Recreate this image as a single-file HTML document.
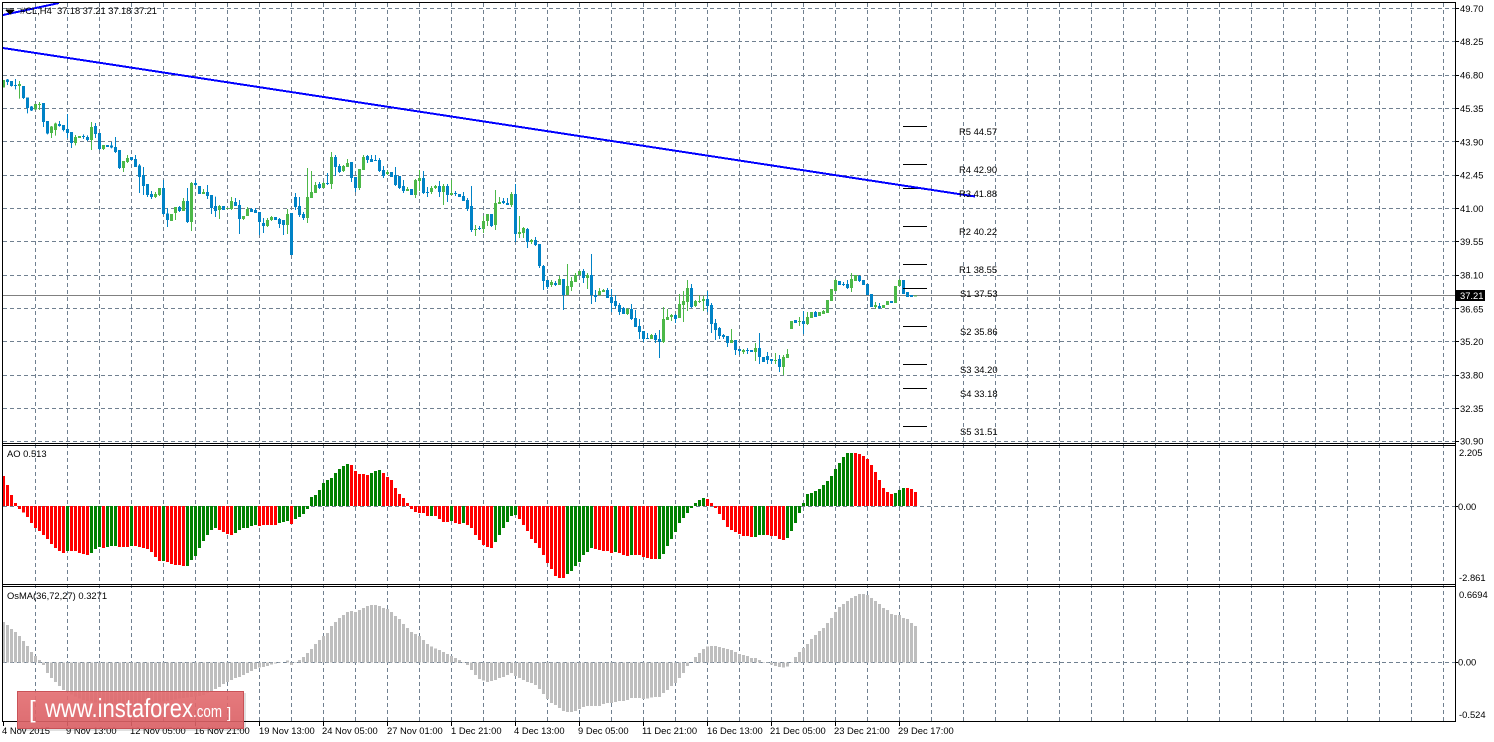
<!DOCTYPE html>
<html>
<head>
<meta charset="utf-8">
<title>CL H4</title>
<style>
html,body{margin:0;padding:0;background:#fff;width:1494px;height:742px;overflow:hidden}
svg{display:block;position:absolute;left:0;top:0}
text{font-family:"Liberation Sans",sans-serif;font-size:9.4px;fill:#000}
.b{stroke:#0082c6;fill:none}
.g{stroke:#4cb848;fill:none}
.w{stroke-width:1}
.t{stroke-width:3}
.wm{font-size:26px;fill:#fff}
</style>
</head>
<body>
<svg width="1494" height="742" viewBox="0 0 1494 742" xmlns="http://www.w3.org/2000/svg">
<!-- grid -->
<g shape-rendering="crispEdges" stroke="#708090" stroke-width="1" stroke-dasharray="4 3" fill="none">
<path d="M3 8.5H1455M3 41.5H1455M3 75.5H1455M3 108.5H1455M3 141.5H1455M3 175.5H1455M3 208.5H1455M3 241.5H1455M3 275.5H1455M3 308.5H1455M3 341.5H1455M3 375.5H1455M3 408.5H1455M3 441.5H1455M3 506.5H1455M3 662.5H1455"/>
<path id="v1" d="M35.5 3V721M67.5 3V721M99.5 3V721M131.5 3V721M163.5 3V721M195.5 3V721M227.5 3V721M259.5 3V721M291.5 3V721M323.5 3V721M355.5 3V721M387.5 3V721M419.5 3V721M451.5 3V721M483.5 3V721M515.5 3V721M547.5 3V721M579.5 3V721M611.5 3V721M643.5 3V721M675.5 3V721M707.5 3V721M739.5 3V721M771.5 3V721M803.5 3V721M835.5 3V721M867.5 3V721M899.5 3V721M931.5 3V721M963.5 3V721M995.5 3V721M1027.5 3V721M1059.5 3V721M1091.5 3V721M1123.5 3V721M1155.5 3V721M1187.5 3V721M1219.5 3V721M1251.5 3V721M1283.5 3V721M1315.5 3V721M1347.5 3V721M1379.5 3V721M1411.5 3V721M1443.5 3V721"/>
</g>
<!-- current price line -->
<path d="M3 295.5H1455" stroke="#808080" stroke-width="1" shape-rendering="crispEdges"/>
<!-- candles left -->
<g shape-rendering="crispEdges" transform="scale(1,.33333)">
<path class="b w" d="M7.5 237V255M11.5 243V260M15.5 237V268M23.5 258V297M27.5 293V340M31.5 318V333M43.5 309V381M47.5 363V403M59.5 363V380M63.5 375V394M67.5 342V414M71.5 396V444M83.5 403V417M87.5 406V423M95.5 369V414M99.5 399V450M107.5 435V441M111.5 426V445M115.5 411V459M119.5 450V507M131.5 471V480M135.5 465V501M139.5 492V579M143.5 501V585M147.5 552V591M151.5 573V597M163.5 540V645M167.5 624V681M179.5 618V636M187.5 564V669M195.5 540V558M199.5 558V582M207.5 555V597M211.5 585V642M215.5 590V651M223.5 618V630M235.5 594V618M239.5 600V702M251.5 624V636M255.5 624V639M259.5 636V705M263.5 654V699M275.5 651V660M279.5 654V684M283.5 660V705M291.5 639V765M295.5 579V630M299.5 591V651M303.5 636V660M319.5 546V567M327.5 519V555M335.5 465V528M339.5 492V519M351.5 486V546M355.5 531V576M367.5 465V489M371.5 465V486M375.5 465V483M379.5 474V516M383.5 498V534M391.5 516V531M395.5 501V558M399.5 528V567"/>
<path class="b t" d="M7.5 239V246M11.5 243V258M15.5 255V258M23.5 258V294M27.5 293V324M31.5 320V331M43.5 309V366M47.5 363V400M59.5 372V378M63.5 375V390M67.5 387V399M71.5 396V429M83.5 408V411M87.5 411V420M95.5 378V402M99.5 399V447M107.5 435V441M111.5 436V442M115.5 441V456M119.5 450V504M131.5 471V480M135.5 477V501M139.5 497V531M143.5 525V558M147.5 552V585M151.5 582V591M163.5 564V642M167.5 640V660M179.5 621V633M187.5 603V666M195.5 549V555M199.5 558V582M207.5 576V588M211.5 585V624M215.5 618V633M223.5 618V630M235.5 606V618M239.5 615V657M251.5 627V636M255.5 630V639M259.5 636V666M263.5 669V678M275.5 651V660M279.5 657V672M283.5 660V675M291.5 639V765M295.5 591V621M299.5 618V645M303.5 642V654M319.5 552V564M327.5 549V552M335.5 471V501M339.5 498V516M351.5 486V534M355.5 531V564M367.5 468V480M371.5 477V486M375.5 480V483M379.5 480V513M383.5 510V528M391.5 516V531M395.5 525V555M399.5 528V564"/>
<path class="g w" d="M3.5 240V262M19.5 243V296M35.5 312V329M39.5 306V330M51.5 378V414M55.5 368V407M75.5 405V436M79.5 408V414M91.5 366V450M103.5 435V450M123.5 483V516M127.5 465V489M155.5 576V594M159.5 564V588M171.5 642V663M175.5 621V660M183.5 594V633M191.5 546V693M203.5 567V582M219.5 615V657M227.5 624V627M231.5 591V630M243.5 648V660M247.5 621V648M267.5 654V681M271.5 648V663M287.5 627V702M307.5 504V669M311.5 513V594M315.5 546V579M323.5 546V564M331.5 456V567M343.5 495V516M347.5 477V501M359.5 507V570M363.5 465V510M387.5 510V525"/>
<path class="g t" d="M3.5 240V262M19.5 252V258M35.5 312V329M39.5 312V315M51.5 380V399M55.5 371V390M75.5 411V429M79.5 408V414M91.5 381V420M103.5 435V447M123.5 483V504M127.5 474V486M155.5 582V591M159.5 564V585M171.5 642V663M175.5 621V639M183.5 603V633M191.5 549V666M203.5 576V582M219.5 618V630M227.5 624V627M231.5 603V627M243.5 648V657M247.5 627V648M267.5 660V678M271.5 651V660M287.5 642V675M307.5 591V654M311.5 576V594M315.5 555V579M323.5 549V564M331.5 471V552M343.5 498V513M347.5 489V501M359.5 507V564M363.5 471V510M387.5 516V522"/>
</g>
<!-- candles middle -->
<g shape-rendering="crispEdges" transform="translate(0,160) scale(1,.33333)">
<path class="b w" d="M403.5 60V99M411.5 87V105M423.5 33V102M427.5 81V111M439.5 63V111M447.5 72V126M455.5 93V108M459.5 102V111M463.5 96V123M467.5 114V153M471.5 78V216M479.5 198V210M491.5 162V201M503.5 114V132M507.5 114V135M515.5 72V246M527.5 204V264M535.5 231V258M539.5 252V324M543.5 315V390M547.5 360V387M555.5 363V378M563.5 357V450M583.5 327V369M591.5 282V432M595.5 390V426M607.5 384V414M611.5 387V456M615.5 405V447M619.5 429V465M623.5 441V462M631.5 432V480M635.5 450V501M639.5 477V537M643.5 513V546M647.5 519V537M655.5 519V549M659.5 510V594M675.5 462V489M691.5 372V444M707.5 393V456M711.5 429V519M715.5 477V540M719.5 501V537M723.5 522V537M727.5 528V561M735.5 540V585M739.5 567V585M747.5 564V582M751.5 570V576M759.5 519V612M763.5 591V606M767.5 576V612M771.5 597V612M779.5 585V636"/>
<path class="b t" d="M403.5 78V93M411.5 87V105M423.5 54V99M427.5 96V99M439.5 78V96M447.5 78V105M455.5 99V102M459.5 102V111M463.5 108V123M467.5 120V147M471.5 138V210M479.5 204V207M491.5 162V198M503.5 123V129M507.5 129V135M515.5 102V222M527.5 207V246M535.5 240V255M539.5 252V318M543.5 318V363M547.5 360V381M555.5 369V375M563.5 357V405M583.5 333V354M591.5 345V405M595.5 405V411M607.5 390V414M611.5 411V429M615.5 423V438M619.5 435V456M623.5 444V462M631.5 447V477M635.5 474V501M639.5 498V516M643.5 513V537M647.5 534V537M655.5 525V540M659.5 537V546M675.5 465V477M691.5 384V441M707.5 417V438M711.5 435V492M715.5 489V510M719.5 504V528M723.5 525V531M727.5 528V549M735.5 540V570M739.5 567V573M747.5 570V573M751.5 570V576M759.5 564V591M763.5 591V606M767.5 588V600M771.5 597V603M779.5 597V621"/>
<path class="g w" d="M407.5 81V93M415.5 57V114M419.5 30V93M431.5 78V102M435.5 75V87M443.5 72V135M451.5 60V105M475.5 195V228M483.5 168V219M487.5 162V198M495.5 90V210M499.5 111V132M511.5 96V141M519.5 168V234M523.5 201V234M531.5 237V252M551.5 360V381M559.5 348V375M567.5 312V405M571.5 351V393M575.5 339V366M579.5 333V345M587.5 339V387M599.5 384V405M603.5 387V396M627.5 444V465M651.5 522V537M663.5 441V549M667.5 447V480M671.5 462V483M679.5 402V474M683.5 393V486M687.5 360V453M695.5 420V441M699.5 405V429M703.5 408V453M731.5 507V549M743.5 567V582M755.5 549V603M775.5 579V612M783.5 585V645M787.5 567V594"/>
<path class="g t" d="M407.5 87V93M415.5 60V105M419.5 54V63M431.5 84V96M435.5 78V84M443.5 78V96M451.5 99V105M475.5 207V210M483.5 183V207M487.5 162V183M495.5 129V195M499.5 126V132M511.5 102V135M519.5 216V222M523.5 204V219M531.5 240V246M551.5 366V375M559.5 357V375M567.5 378V405M571.5 363V381M575.5 345V366M579.5 333V345M587.5 345V354M599.5 393V405M603.5 390V396M627.5 447V462M651.5 525V537M663.5 477V546M667.5 471V480M671.5 465V471M679.5 432V474M683.5 423V435M687.5 384V426M695.5 423V438M699.5 423V426M703.5 417V423M731.5 540V549M743.5 570V576M755.5 564V576M775.5 600V603M783.5 591V621M787.5 582V594"/>
</g>
<!-- candles right -->
<g shape-rendering="crispEdges" transform="translate(0,110) scale(1,.33333)">
<path class="b w" d="M795.5 630V639M803.5 603V672M815.5 603V621M839.5 513V525M843.5 516V528M847.5 510V537M859.5 495V516M863.5 510V525M867.5 522V555M871.5 552V591M879.5 579V597M891.5 573V579M903.5 510V552M907.5 546V561M911.5 555V561"/>
<path class="b t" d="M795.5 630V639M803.5 633V642M815.5 606V621M839.5 513V525M843.5 522V525M847.5 522V534M859.5 498V513M863.5 510V525M867.5 522V555M871.5 552V591M879.5 588V594M891.5 573V579M903.5 510V552M907.5 546V561M911.5 555V561"/>
<path class="g w" d="M791.5 633V657M799.5 621V648M807.5 606V645M811.5 606V624M819.5 606V618M823.5 600V612M827.5 570V609M831.5 537V573M835.5 507V543M851.5 489V546M855.5 495V513M875.5 576V597M883.5 585V594M887.5 573V585M895.5 528V579M899.5 507V528"/>
<path class="g t" d="M791.5 633V657M799.5 633V636M807.5 621V642M811.5 606V624M819.5 606V618M823.5 603V612M827.5 570V609M831.5 537V573M835.5 510V543M851.5 507V534M855.5 495V513M875.5 585V591M883.5 585V594M887.5 573V585M895.5 528V579M899.5 510V528M915.5 557V560"/>
</g>
<!-- pivots -->
<path d="M903 126.5H927M903 164.5H927M903 188.5H927M903 226.5H927M903 264.5H927M903 288.5H927M903 326.5H927M903 364.5H927M903 388.5H927M903 426.5H927" stroke="#000" stroke-width="1" shape-rendering="crispEdges"/>
<!-- trend lines -->
<g stroke="#0000ff" stroke-width="2" fill="none" shape-rendering="crispEdges">
<path d="M3 48L975 196.5"/>
<path d="M3 15L59 3"/>
</g>
<!-- AO -->
<g shape-rendering="crispEdges" transform="translate(0,440) scale(1,.33333)" stroke-width="3" fill="none">
<path stroke="#ff0000" d="M3.5 198V108M7.5 198V135M11.5 198V165M15.5 198V189M19.5 198V207M23.5 198V218M27.5 198V231M31.5 198V249M35.5 198V264M39.5 198V273M43.5 198V285M47.5 198V297M51.5 198V312M55.5 198V324M59.5 198V333M63.5 198V339M71.5 198V333M75.5 198V333M79.5 198V339M83.5 198V342M87.5 198V345M103.5 198V324M119.5 198V321M123.5 198V321M127.5 198V321M135.5 198V318M139.5 198V321M143.5 198V324M147.5 198V327M151.5 198V336M155.5 198V351M159.5 198V363M167.5 198V366M171.5 198V372M175.5 198V375M179.5 198V375M183.5 198V378M219.5 198V270M223.5 198V276M227.5 198V282M231.5 198V285M259.5 198V258M263.5 198V255M267.5 198V255M271.5 198V255M275.5 198V255M291.5 198V252M351.5 198V75M355.5 198V93M359.5 198V102M363.5 198V102M367.5 198V105M383.5 198V99M387.5 198V111M391.5 198V120M395.5 198V144M399.5 198V162M403.5 198V174M407.5 198V189M411.5 198V207M415.5 198V216M419.5 198V219M423.5 198V219M427.5 198V228M435.5 198V228M439.5 198V237M443.5 198V246M447.5 198V246M455.5 198V249M459.5 198V252M467.5 198V255M471.5 198V264M475.5 198V285M479.5 198V300M483.5 198V315M487.5 198V321M491.5 198V324M519.5 198V237M523.5 198V255M527.5 198V273M531.5 198V297M535.5 198V309M539.5 198V324M543.5 198V345M547.5 198V369M551.5 198V387M555.5 198V408M559.5 198V414M563.5 198V414M595.5 198V327M599.5 198V330M603.5 198V333M607.5 198V333M611.5 198V339M619.5 198V339M623.5 198V345M627.5 198V348M635.5 198V345M639.5 198V345M643.5 198V351M647.5 198V354M651.5 198V357M655.5 198V357M707.5 198V177M711.5 198V189M715.5 198V204M719.5 198V222M723.5 198V240M727.5 198V261M731.5 198V270M735.5 198V276M739.5 198V282M743.5 198V288M747.5 198V288M751.5 198V291M767.5 198V285M771.5 198V288M775.5 198V288M779.5 198V297M783.5 198V300M855.5 198V39M859.5 198V42M863.5 198V48M867.5 198V57M871.5 198V75M875.5 198V96M879.5 198V120M883.5 198V144M887.5 198V156M891.5 198V162M907.5 198V144M911.5 198V147M915.5 198V156"/>
<path stroke="#008000" d="M67.5 198V333M91.5 198V339M95.5 198V327M99.5 198V321M107.5 198V321M111.5 198V318M115.5 198V318M131.5 198V318M163.5 198V363M187.5 198V378M191.5 198V360M195.5 198V348M199.5 198V324M203.5 198V303M207.5 198V285M211.5 198V270M215.5 198V264M235.5 198V279M239.5 198V270M243.5 198V264M247.5 198V264M251.5 198V258M255.5 198V255M279.5 198V249M283.5 198V246M287.5 198V243M295.5 198V237M299.5 198V231M303.5 198V222M307.5 198V207M311.5 198V171M315.5 198V165M319.5 198V150M323.5 198V129M327.5 198V120M331.5 198V114M335.5 198V99M339.5 198V87M343.5 198V78M347.5 198V72M371.5 198V99M375.5 198V93M379.5 198V90M431.5 198V228M451.5 198V243M463.5 198V249M495.5 198V306M499.5 198V285M503.5 198V264M507.5 198V246M511.5 198V228M515.5 198V225M567.5 198V402M571.5 198V393M575.5 198V378M579.5 198V366M583.5 198V345M587.5 198V336M591.5 198V324M615.5 198V336M631.5 198V345M659.5 198V357M663.5 198V342M667.5 198V318M671.5 198V297M675.5 198V276M679.5 198V249M683.5 198V234M687.5 198V219M691.5 198V204M695.5 198V189M699.5 198V180M703.5 198V174M755.5 198V291M759.5 198V285M763.5 198V285M787.5 198V294M791.5 198V273M795.5 198V249M799.5 198V219M803.5 198V189M807.5 198V162M811.5 198V159M815.5 198V153M819.5 198V147M823.5 198V135M827.5 198V123M831.5 198V108M835.5 198V87M839.5 198V69M843.5 198V51M847.5 198V39M851.5 198V39M895.5 198V159M899.5 198V150M903.5 198V144"/>
</g>
<!-- OsMA -->
<g shape-rendering="crispEdges" transform="translate(0,585) scale(1,.33333)" stroke-width="3" fill="none" stroke="#bebebe">
<path d="M3.5 232V111M7.5 232V120M11.5 232V132M15.5 232V141M19.5 232V153M23.5 232V168M27.5 232V183M31.5 232V201M35.5 232V213M39.5 232V225M43.5 232V240M47.5 232V264M51.5 232V279M55.5 232V291M59.5 232V303M63.5 232V315M67.5 232V320M71.5 232V328M75.5 232V334M79.5 232V340M83.5 232V345M87.5 232V348M91.5 232V350M95.5 232V352M99.5 232V354M103.5 232V355M107.5 232V356M111.5 232V357M115.5 232V358M119.5 232V358M123.5 232V358M127.5 232V359M131.5 232V360M135.5 232V360M139.5 232V360M143.5 232V360M147.5 232V358M151.5 232V356M155.5 232V354M159.5 232V352M163.5 232V350M167.5 232V348M171.5 232V345M175.5 232V343M179.5 232V341M183.5 232V339M187.5 232V337M191.5 232V336M195.5 232V335M199.5 232V333M203.5 232V330M207.5 232V324M211.5 232V318M215.5 232V312M219.5 232V306M223.5 232V297M227.5 232V291M231.5 232V285M235.5 232V279M239.5 232V276M243.5 232V270M247.5 232V264M251.5 232V258M255.5 232V252M259.5 232V248M263.5 232V246M267.5 232V243M271.5 232V238M275.5 232V236M279.5 232V234M283.5 232V233M287.5 232V226M291.5 232V240M295.5 232V234M299.5 232V225M303.5 232V216M307.5 232V204M311.5 232V192M315.5 232V177M319.5 232V165M323.5 232V153M327.5 232V144M331.5 232V123M335.5 232V111M339.5 232V99M343.5 232V90M347.5 232V81M351.5 232V78M355.5 232V81M359.5 232V75M363.5 232V69M367.5 232V63M371.5 232V60M375.5 232V60M379.5 232V63M383.5 232V69M387.5 232V72M391.5 232V81M395.5 232V93M399.5 232V102M403.5 232V117M407.5 232V129M411.5 232V141M415.5 232V147M419.5 232V153M423.5 232V165M427.5 232V177M431.5 232V184M435.5 232V190M439.5 232V195M443.5 232V201M447.5 232V207M451.5 232V213M455.5 232V219M459.5 232V225M463.5 232V231M467.5 232V240M471.5 232V255M475.5 232V270M479.5 232V282M483.5 232V287M487.5 232V291M491.5 232V288M495.5 232V285M499.5 232V279M503.5 232V276M507.5 232V270M511.5 232V264M515.5 232V273M519.5 232V279M523.5 232V285M527.5 232V291M531.5 232V294M535.5 232V300M539.5 232V312M543.5 232V327M547.5 232V342M551.5 232V354M555.5 232V360M559.5 232V369M563.5 232V378M567.5 232V381M571.5 232V381M575.5 232V378M579.5 232V372M583.5 232V366M587.5 232V363M591.5 232V363M595.5 232V363M599.5 232V363M603.5 232V357M607.5 232V354M611.5 232V354M615.5 232V351M619.5 232V348M623.5 232V348M627.5 232V345M631.5 232V339M635.5 232V339M639.5 232V339M643.5 232V342M647.5 232V340M651.5 232V338M655.5 232V336M659.5 232V336M663.5 232V324M667.5 232V315M671.5 232V303M675.5 232V294M679.5 232V279M683.5 232V264M687.5 232V243M691.5 232V233M695.5 232V216M699.5 232V204M703.5 232V192M707.5 232V184M711.5 232V183M715.5 232V183M719.5 232V186M723.5 232V189M727.5 232V192M731.5 232V195M735.5 232V201M739.5 232V207M743.5 232V210M747.5 232V213M751.5 232V219M755.5 232V219M759.5 232V225M763.5 232V231M767.5 232V234M771.5 232V238M775.5 232V243M779.5 232V246M783.5 232V248M787.5 232V245M791.5 232V231M795.5 232V216M799.5 232V201M803.5 232V189M807.5 232V177M811.5 232V162M815.5 232V150M819.5 232V138M823.5 232V129M827.5 232V114M831.5 232V99M835.5 232V81M839.5 232V66M843.5 232V57M847.5 232V48M851.5 232V39M855.5 232V33M859.5 232V27M863.5 232V27M867.5 232V30M871.5 232V39M875.5 232V48M879.5 232V57M883.5 232V69M887.5 232V75M891.5 232V87M895.5 232V90M899.5 232V90M903.5 232V99M907.5 232V102M911.5 232V114M915.5 232V123"/>
</g>
<!-- frames -->
<g stroke="#000" stroke-width="1" shape-rendering="crispEdges" fill="none">
<path d="M2.5 2.5H1455.5V721.5H2.5Z"/>
<path d="M3 443.5H1455M3 445.5H1455M3 584.5H1455M3 586.5H1455"/>
<path d="M1456 8.5h3M1456 41.5h3M1456 75.5h3M1456 108.5h3M1456 141.5h3M1456 175.5h3M1456 208.5h3M1456 241.5h3M1456 275.5h3M1456 308.5h3M1456 341.5h3M1456 375.5h3M1456 408.5h3M1456 441.5h3M1456 506.5h2M1456 662.5h2"/>
<path d="M3.5 722v4M67.5 722v4M131.5 722v4M195.5 722v4M259.5 722v4M323.5 722v4M387.5 722v4M451.5 722v4M515.5 722v4M579.5 722v4M643.5 722v4M707.5 722v4M771.5 722v4M835.5 722v4M899.5 722v4"/>
</g>
<!-- top-left triangle -->
<path d="M6 9h8M6.5 10.5h7L10 14z" fill="#000" stroke="#000" stroke-width="1" shape-rendering="crispEdges"/>
<text x="20" y="14">#CL,H4</text>
<text x="57" y="14" textLength="100" lengthAdjust="spacing">37.18 37.21 37.18 37.21</text>
<text x="7" y="457">AO 0.513</text>
<text x="7" y="599">OsMA(36,72,27) 0.3271</text>
<!-- right axis -->
<g>
<text x="1460" y="12">49.70</text>
<text x="1460" y="45">48.25</text>
<text x="1460" y="78.500">46.80</text>
<text x="1460" y="112">45.35</text>
<text x="1460" y="145.500">43.90</text>
<text x="1460" y="178.500">42.45</text>
<text x="1460" y="212">41.00</text>
<text x="1460" y="245">39.55</text>
<text x="1460" y="278.500">38.10</text>
<text x="1460" y="312.500">36.65</text>
<text x="1460" y="345">35.20</text>
<text x="1460" y="378.500">33.80</text>
<text x="1460" y="412">32.35</text>
<text x="1460" y="444.500">30.90</text>
<text x="1459" y="456">2.205</text>
<text x="1458" y="510">0.00</text>
<text x="1459" y="581">-2.861</text>
<text x="1459" y="598">0.6694</text>
<text x="1458" y="665.500">0.00</text>
<text x="1459" y="718">-0.524</text>
</g>
<rect x="1456" y="290" width="29" height="11" fill="#000"/>
<text x="1460" y="299" style="fill:#fff">37.21</text>
<!-- pivot labels -->
<g>
<text x="959" y="135">R5 44.57</text>
<text x="959" y="173">R4 42.90</text>
<text x="959" y="197">R3 41.88</text>
<text x="959" y="235">R2 40.22</text>
<text x="959" y="273">R1 38.55</text>
<text x="960" y="297">S1 37.53</text>
<text x="960" y="335">S2 35.86</text>
<text x="960" y="373">S3 34.20</text>
<text x="960" y="397">S4 33.18</text>
<text x="960" y="435">S5 31.51</text>
</g>
<!-- time labels -->
<g>
<text x="2" y="734">4 Nov 2015</text>
<text x="66" y="734">9 Nov 13:00</text>
<text x="130" y="734">12 Nov 05:00</text>
<text x="194" y="734">16 Nov 21:00</text>
<text x="259" y="734">19 Nov 13:00</text>
<text x="322" y="734">24 Nov 05:00</text>
<text x="387" y="734">27 Nov 01:00</text>
<text x="451" y="734">1 Dec 21:00</text>
<text x="514" y="734">4 Dec 13:00</text>
<text x="578" y="734">9 Dec 05:00</text>
<text x="642" y="734">11 Dec 21:00</text>
<text x="707" y="734">16 Dec 13:00</text>
<text x="770" y="734">21 Dec 05:00</text>
<text x="834" y="734">23 Dec 21:00</text>
<text x="898" y="734">29 Dec 17:00</text>
</g>
<!-- watermark -->
<defs>
<linearGradient id="wg" x1="0" y1="0" x2="0" y2="1">
<stop offset="0" stop-color="#e66f72"/>
<stop offset="1" stop-color="#dc6065"/>
</linearGradient>
</defs>
<rect x="19" y="693" width="227" height="38" fill="#000" opacity=".12"/>
<rect x="17.500" y="691.500" width="226" height="37" fill="url(#wg)" fill-opacity=".9" stroke="#c85257" stroke-width="1"/>
<text x="29" y="717.500" style="font-size:24px;fill:#fff">[</text>
<text class="wm" x="45" y="717" textLength="148" lengthAdjust="spacingAndGlyphs">www.instaforex</text>
<text x="193" y="717" style="font-size:17px;fill:#fff" textLength="29" lengthAdjust="spacingAndGlyphs">.com</text>
<text x="227" y="718" style="font-size:15px;fill:#fff">]</text>
</svg>
</body>
</html>
